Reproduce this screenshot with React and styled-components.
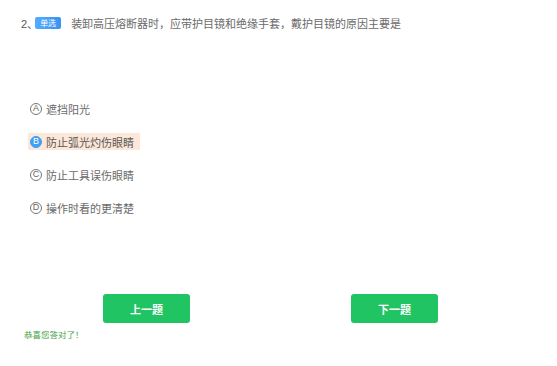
import React from "react";
import styled, { createGlobalStyle } from "styled-components";

const Global = createGlobalStyle`
  html, body { margin: 0; padding: 0; background: #fff; }
  body { font-family: "Noto Sans CJK SC", "Noto Sans", sans-serif; }
`;

const Page = styled.div`
  width: 557px;
  height: 366px;
  box-sizing: border-box;
  padding: 15px 0 0 21px;
  display: flex;
  flex-direction: column;
`;

const Question = styled.div`
  display: flex;
  align-items: center;
  height: 16px;
  font-size: 11px;
  color: #6a6a6a;
`;

const Num = styled.span`
  font-family: "Liberation Sans", "Noto Sans CJK SC", sans-serif;
  font-size: 11px;
  color: #555;
`;

const Badge = styled.span`
  display: inline-flex;
  align-items: center;
  justify-content: center;
  width: 26px;
  height: 12px;
  margin: 0 10px 0 -3px;
  border-radius: 2px;
  background: linear-gradient(90deg, #52adff, #3a92f2);
  color: #fff;
  font-size: 8px;
  line-height: 1;
`;

const Options = styled.div`
  display: flex;
  flex-direction: column;
  align-items: flex-start;
  gap: 16px;
  margin: 69px 0 0 8px;
`;

const Option = styled.div`
  display: flex;
  align-items: center;
  gap: 4px;
  height: 17px;
  padding: 0 6px 0 2px;
  margin-left: -1px;
  font-size: 11px;
  color: ${(p) => (p.$selected ? "#5a5a5a" : "#6a6a6a")};
  background: ${(p) => (p.$selected ? "#fde7d8" : "transparent")};
`;

const Letter = styled.span`
  box-sizing: border-box;
  width: 12px;
  height: 12px;
  border-radius: 50%;
  display: inline-flex;
  align-items: center;
  justify-content: center;
  font-family: "Liberation Sans", sans-serif;
  font-size: 9px;
  line-height: 1;
  border: 1px solid ${(p) => (p.$selected ? "#3ea1f5" : "#777")};
  background: ${(p) => (p.$selected ? "#3ea1f5" : "#fff")};
  color: ${(p) => (p.$selected ? "#fff" : "#666")};
`;

const Buttons = styled.div`
  display: flex;
  gap: 161px;
  margin: 78px 0 0 82px;
`;

const Button = styled.button`
  width: 87px;
  height: 29px;
  border: none;
  border-radius: 3px;
  background: #20c462;
  color: #fff;
  font-family: "Noto Sans CJK SC", sans-serif;
  font-size: 11px;
  font-weight: bold;
  padding: 0;
`;

const Result = styled.div`
  margin: 5px 0 0 3px;
  font-size: 8.5px;
  color: #3f9f3f;
`;

const options = [
  { k: "A", t: "遮挡阳光" },
  { k: "B", t: "防止弧光灼伤眼睛", sel: true },
  { k: "C", t: "防止工具误伤眼睛" },
  { k: "D", t: "操作时看的更清楚" },
];

export default function App() {
  return (
    <>
      <Global />
      <Page>
        <Question>
          <Num>2、</Num>
          <Badge>单选</Badge>
          <span>装卸高压熔断器时，应带护目镜和绝缘手套，戴护目镜的原因主要是</span>
        </Question>
        <Options>
          {options.map((o) => (
            <Option key={o.k} $selected={o.sel}>
              <Letter $selected={o.sel}>{o.k}</Letter>
              {o.t}
            </Option>
          ))}
        </Options>
        <Buttons>
          <Button>上一题</Button>
          <Button>下一题</Button>
        </Buttons>
        <Result>恭喜您答对了！</Result>
      </Page>
    </>
  );
}
